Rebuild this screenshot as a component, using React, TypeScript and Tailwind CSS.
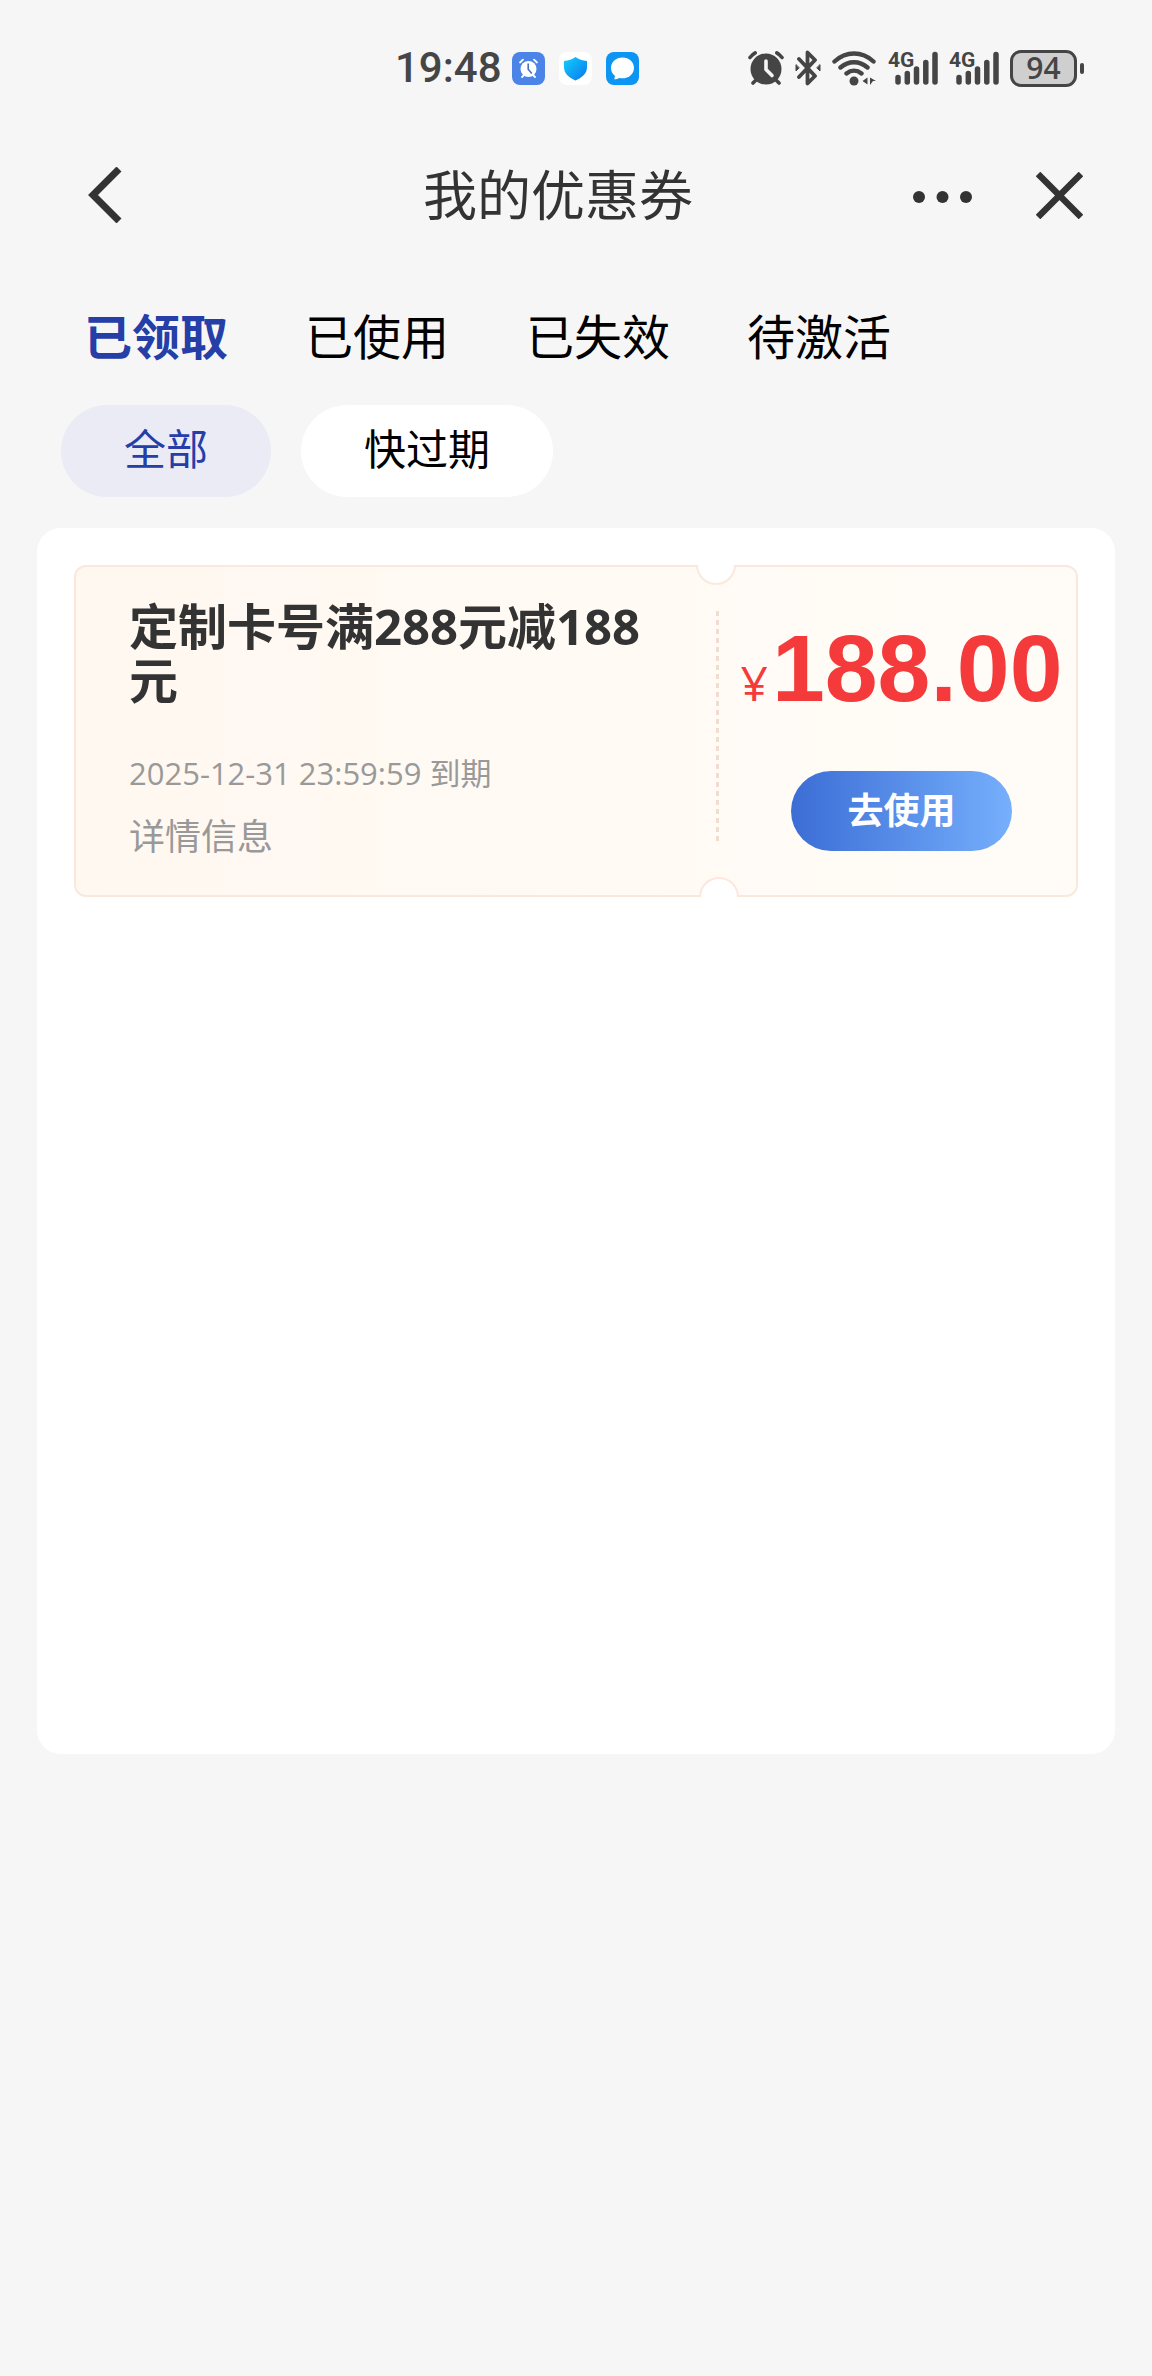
import { useState } from 'react';

const tabs = ['已领取', '已使用', '已失效', '待激活'];
const filters = ['全部', '快过期'];

function AlarmAppIcon() {
  return (
    <svg width="33" height="33" viewBox="0 0 33 33" aria-hidden="true">
      <rect width="33" height="33" rx="8" fill="#4b83e6" />
      <circle cx="16.5" cy="17" r="8" fill="#fff" />
      <path d="M8 10.5l3-2.8M25 10.5l-3-2.8M10 25l2-2M23 25l-2-2" stroke="#fff" strokeWidth="1.8" strokeLinecap="round" />
      <path d="M16.2 11.5v5.8l3.6 4.2" stroke="#4b6fc0" strokeWidth="1.6" fill="none" />
    </svg>
  );
}

function ShieldAppIcon() {
  return (
    <svg width="33" height="33" viewBox="0 0 33 33" aria-hidden="true">
      <defs>
        <linearGradient id="shield" x1="0" y1="0" x2="1" y2="1">
          <stop offset="0" stopColor="#12d0fb" />
          <stop offset="1" stopColor="#0a76ee" />
        </linearGradient>
      </defs>
      <rect width="33" height="33" rx="8" fill="#fff" />
      <path d="M16.5 5c3 2.3 7 3.4 11.5 4v6c0 6.5-4.5 10.5-11.5 13.5C9.5 25.5 5 21.5 5 15V9c4.5-.6 8.500-1.700 11.500-4z" fill="url(#shield)" />
    </svg>
  );
}

function MessageAppIcon() {
  return (
    <svg width="33" height="33" viewBox="0 0 33 33" aria-hidden="true">
      <rect width="33" height="33" rx="8" fill="#0c95f2" />
      <path d="M16.5 5.5c6.5 0 11.5 4.6 11.5 10.4s-5 10.4-11.5 10.4c-1.2 0-2.3-.1-3.4-.4-1.4 1-3.1 1.5-5 1.3.6-1 .8-2 .7-3.4C6.5 21.8 5 19.2 5 15.9 5 10.1 10 5.5 16.5 5.5z" fill="#fff" />
    </svg>
  );
}

function AlarmIcon() {
  return (
    <svg width="36" height="36" viewBox="0 0 36 36" fill="none" stroke="#454545" strokeWidth="3.6" strokeLinecap="round" aria-hidden="true">
      <circle cx="18" cy="19" r="15.5" fill="#454545" stroke="none" />
      <path d="M2 7.5c1.5-2 3-3.5 5.2-4.7M34 7.5c-1.5-2-3-3.5-5.2-4.7M5 33l4-4M31 33l-4-4" />
      <path d="M18 11v8.5l6 6" stroke="#f6f6f6" strokeLinejoin="round" />
    </svg>
  );
}

function BluetoothIcon() {
  return (
    <svg width="26" height="36" viewBox="0 0 26 36" fill="none" stroke="#454545" strokeWidth="3.8" strokeLinecap="round" strokeLinejoin="round" aria-hidden="true">
      <path d="M4 9l16 17-7.5 7.5V2.5L20 10 4 27" />
      <path d="M1 15v6l3-3zM25 15v6l-3-3z" fill="#454545" strokeWidth="1" />
    </svg>
  );
}

function WifiIcon() {
  return (
    <svg width="45" height="36" viewBox="0 0 45 36" fill="none" stroke="#454545" strokeWidth="4.4" strokeLinecap="round" aria-hidden="true">
      <path d="M2.5 11.5C14 .8 30 .8 41.5 11.5M8.5 17.5c8-7 19-7 27 0M14.5 23.5c4.5-3.6 10.5-3.6 15 0" />
      <circle cx="22" cy="31" r="4.5" fill="#454545" stroke="none" />
      <path d="M35.5 27.5v7l-5-3.5zM38 27.5l6 3.500h-3l-3 4z" fill="#454545" stroke="none" />
    </svg>
  );
}

function SignalIcon() {
  return (
    <svg width="50" height="36" viewBox="0 0 50 36" overflow="visible" aria-label="4G">
      <g stroke="#454545" strokeWidth="5.5" strokeLinecap="round">
        <path d="M10 27.5v4.5M19.3 23.5V32M28.5 19v13M37.8 12.5V32M47 4.5V32" />
      </g>
      <text x="0" y="17" className="font-['Liberation_Sans_Narrow','Roboto',sans-serif] text-[21px] font-bold" fill="#454545">4G</text>
    </svg>
  );
}

function StatusBar() {
  return (
    <div className="flex h-[46px] items-center justify-between pl-[395px] pr-[68px] text-[#454545]">
      <div className="flex items-center gap-[14px]">
        <span className="w-[103px] font-['Roboto',sans-serif] text-[42px] leading-[46px] font-medium whitespace-nowrap">19:48</span>
        <AlarmAppIcon />
        <ShieldAppIcon />
        <MessageAppIcon />
      </div>
      <div className="flex items-center gap-[11px]">
        <AlarmIcon />
        <BluetoothIcon />
        <WifiIcon />
        <SignalIcon />
        <SignalIcon />
        <div className="flex items-center gap-[3px]">
          <span className="flex h-[37px] w-[67px] items-center justify-center rounded-[11px] border-[3px] border-[#454545] bg-[#cfcfcf] text-[30px] leading-[30px] font-semibold">
            94
          </span>
          <span className="h-[11px] w-1 rounded-full bg-[#454545]" />
        </div>
      </div>
    </div>
  );
}

function NavBar() {
  return (
    <header className="mt-[68px] flex h-[72px] items-center pl-[88px] pr-[69px] text-[#333]">
      <button aria-label="返回" className="w-[115px]">
        <svg width="34" height="56" viewBox="0 0 34 56" fill="none" stroke="currentColor" strokeWidth="7">
          <path d="M31 2L5 28l26 26" />
        </svg>
      </button>
      <h1 className="flex-1 text-center text-[54px] leading-[72px]">我的优惠券</h1>
      <div className="flex items-center gap-[64px]">
        <button aria-label="更多" className="pt-1">
          <svg width="59" height="12" viewBox="0 0 59 12" fill="currentColor">
            <circle cx="6" cy="6" r="6" />
            <circle cx="29.5" cy="6" r="6" />
            <circle cx="53" cy="6" r="6" />
          </svg>
        </button>
        <button aria-label="关闭">
          <svg width="47" height="47" viewBox="0 0 47 47" fill="none" stroke="currentColor" strokeWidth="6.5">
            <path d="M2 2l43 43M45 2L2 45" />
          </svg>
        </button>
      </div>
    </header>
  );
}

function Coupon() {
  return (
    <article className="relative flex h-[332px] rounded-xl border-2 border-[#fbe8dd] bg-linear-to-r from-[#fff8f1] to-[#fffcf7]">
      <div className="flex flex-1 flex-col items-start pt-8 pl-[53px] pr-[56px] text-[#999]">
        <h2 className="text-[49px] leading-[54px] font-bold text-[#333]">定制卡号满288元减188元</h2>
        <p className="mt-[46px] text-[31px] leading-[40px]">2025-12-31 23:59:59 到期</p>
        <button className="mt-5 text-[36px] leading-[48px]">详情信息</button>
      </div>
      <div className="mt-11 mb-[50px] w-[3px] bg-[repeating-linear-gradient(to_bottom,#f2dcd0_0_5px,transparent_5px_9px)]" />
      <div className="flex w-[357px] flex-col items-center pt-9 pl-2">
        <div className="flex items-baseline gap-1 text-[#f43a3a]">
          <span className="text-[48px] leading-[48px]">¥</span>
          <span className="font-['Liberation_Sans',sans-serif] text-[95px] leading-[130px] font-bold">188.00</span>
        </div>
        <button className="mt-[38px] h-20 w-[221px] rounded-full bg-linear-to-r from-[#3c6dd5] to-[#76affc] text-[36px] leading-[48px] font-bold text-white">
          去使用
        </button>
      </div>
      {/* ticket notches */}
      <span className="absolute -top-0.5 right-[340px] h-5 w-10 rounded-b-full border-2 border-t-0 border-[#fbe8dd] bg-white" />
      <span className="absolute right-[337px] -bottom-0.5 h-5 w-10 rounded-t-full border-2 border-b-0 border-[#fbe8dd] bg-white" />
    </article>
  );
}

export default function App() {
  const [tab, setTab] = useState(tabs[0]);
  const [filter, setFilter] = useState(filters[0]);

  return (
    <div className="min-h-screen bg-[#f6f6f6] pt-[45px] font-['Open_Sans','Noto_Sans_CJK_SC',sans-serif]">
      <StatusBar />
      <NavBar />
      <nav className="mt-[70px] flex gap-[77px] pl-[84px]">
        {tabs.map((name) => (
          <button
            key={name}
            onClick={() => setTab(name)}
            className={`text-[48px] leading-[72px] ${name === tab ? 'font-bold text-[#253ea8]' : 'text-black'}`}
          >
            {name}
          </button>
        ))}
      </nav>
      <div className="mt-8 flex gap-[30px] pl-[61px]">
        {filters.map((name) => (
          <button
            key={name}
            onClick={() => setFilter(name)}
            className={`h-[92px] rounded-full px-[63px] pb-1 text-[42px] leading-[60px] ${name === filter ? 'bg-[#eaebf4] text-[#253ea8]' : 'bg-white text-black'}`}
          >
            {name}
          </button>
        ))}
      </div>
      <main className="mx-[37px] mt-[31px] min-h-[1226px] rounded-3xl bg-white p-[37px]">
        <Coupon />
      </main>
    </div>
  );
}
